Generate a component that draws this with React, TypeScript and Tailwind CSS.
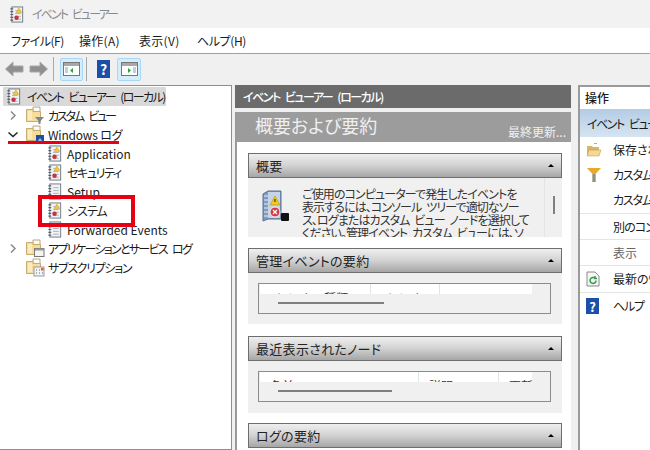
import { FC, ReactNode } from 'react';

const LogBook: FC<{ plain?: boolean }> = ({ plain }) => (
    <svg width="16" height="17" viewBox="0 0 16 18" className="shrink-0">
        <rect x="2.5" y="1" width="11.5" height="16" fill="#f2f3f5" stroke="#6f7784" />
        <path d="M1 3h3M1 6h3M1 9h3M1 12h3M1 15h3" stroke="#56606e" strokeWidth="1.2" />
        <path d="M6 5h6M6 8h6M6 11h6M6 14h6" stroke="#a9b0ba" />
        {!plain && <path d="M10 2l3 5H7z" fill="#f3c62f" stroke="#c99a1a" strokeWidth=".5" />}
        {!plain && <circle cx="7.5" cy="12.5" r="2.4" fill="#c8343c" />}
    </svg>
);

const Folder: FC<{ children?: ReactNode }> = ({ children }) => (
    <svg width="19" height="19" viewBox="0 0 19 19" className="-mr-[1px] shrink-0">
        <path d="M7 1h7v6H7z" fill="#fbfbf8" stroke="#b9a679" />
        <path d="M.5 3.5h6.5v2h7.5v10H.5z" fill="#f6dd9c" stroke="#c6ac6e" />
        <path d="M2 5h4v9H2z" fill="#fbebbd" />
        {children}
    </svg>
);

const TreeRow: FC<{ indent?: string; arrow?: 'right' | 'down'; icon: ReactNode; label: string; textClass?: string }> = ({ indent = 'pl-[5px]', arrow, icon, label, textClass = 'tracking-[-1.4px]' }) => (
    <div className={`flex h-[19px] items-center ${indent}`}>
        {arrow !== undefined ? (
            <svg width="10" height="9" viewBox="0 0 10 9" className="mr-[8px] shrink-0">
                {arrow === 'right'
                    ? <path d="M3 .5l4 4-4 4" fill="none" stroke="#8a8a8a" strokeWidth="1.5" />
                    : <path d="M.5 2.5L5 6.5l4.5-4" fill="none" stroke="#222" strokeWidth="1.5" />}
            </svg>
        ) : null}
        {icon}
        <span className={`ml-[4px] whitespace-nowrap ${textClass}`}>{label}</span>
    </div>
);

const SectionHead: FC<{ title: string }> = ({ title }) => (
    <div className="flex h-[25px] shrink-0 items-center justify-between border border-[#6e6e6e] bg-gradient-to-b from-[#efefef] via-[#d2d2d2] to-[#a6a6a6] px-[7px] text-[13px] tracking-[.3px] text-[#222]">
        <span>{title}</span>
        <span className="mb-[1px] h-0 w-0 border-x-[3px] border-b-[3px] border-x-transparent border-b-black" />
    </div>
);

const TableBox: FC<{ cols: { w: string; label: string }[]; thumb: string }> = ({ cols, thumb }) => (
    <div className="ml-[10px] mr-[11px] h-[31px] border border-[#8c8c8c] bg-[#f0f0f0] pl-[1px]">
        <div className="flex h-[10px] w-[272px] overflow-hidden bg-white text-[12px] leading-[27px] text-[#333]">
            {cols.map((c) => (
                <div key={c.label} className={`${c.w} shrink-0 border-r border-[#e3e3e3] pl-[10px] whitespace-nowrap last:border-r-0`}>{c.label}</div>
            ))}
        </div>
        <div className={`ml-[18px] mt-[8px] h-[2px] ${thumb} bg-[#7f7f7f]`} />
    </div>
);

const ActionRow: FC<{ icon?: ReactNode; label: string; h: string; line?: boolean; dim?: boolean; textClass?: string }> = ({ icon, label, h, line, dim, textClass = 'tracking-[-1.2px]' }) => (
    <div className={`flex items-center whitespace-nowrap ${h} ${line ? 'border-b border-[#e4e4e4]' : ''} ${dim ? 'text-[#666]' : ''}`}>
        <span className="flex w-[33px] shrink-0 justify-start pl-[6px]">{icon}</span>
        <span className={textClass}>{label}</span>
    </div>
);

const App: FC = () => {
    return (
        <div className='relative flex h-[450px] w-[650px] flex-col overflow-hidden bg-[#f0f0f0] text-[12px] text-[#1a1a1a] [font-family:"Noto_Sans_CJK_JP","Noto_Sans",sans-serif] [font-feature-settings:"palt"]'>
            {/* title */}
            <div className="flex h-[28px] shrink-0 items-center bg-[#f2f2f2] pl-[9px] text-[#8a8a8a]">
                <LogBook />
                <span className="ml-[7px] text-[12px] tracking-[-1.9px] [word-spacing:4px]">イベント ビューアー</span>
            </div>
            {/* menu */}
            <div className="flex h-[26px] shrink-0 items-center border-b border-[#a0a0a0] bg-white pl-[11px] text-[12px]">
                <span className="w-[68px] tracking-[-.5px]">ファイル(F)</span>
                <span className="w-[60px] tracking-[.3px]">操作(A)</span>
                <span className="w-[58px] tracking-[.3px]">表示(V)</span>
                <span className="tracking-[-.4px]">ヘルプ(H)</span>
            </div>
            {/* toolbar */}
            <div className="flex h-[30px] shrink-0 items-center bg-[#f0f0f0] pl-[5px]">
                <svg width="43" height="16" viewBox="0 0 43 16">
                    <path d="M.5 8L8 1v4h10v6H8v4z" fill="#8f8f8f" stroke="#a8a8a8" />
                    <path d="M42.5 8L35 1v4H25v6h10v4z" fill="#8f8f8f" stroke="#a8a8a8" />
                </svg>
                <div className="ml-[5px] h-[24px] w-px bg-[#a8a8a8]" />
                <div className="ml-[6px] flex h-[23px] w-[23px] items-center justify-center rounded-[2px] border border-[#a8d8f4] bg-[#d5ecfb]">
                    <svg width="17" height="14" viewBox="0 0 17 14">
                        <rect x=".5" y=".5" width="16" height="13" fill="#fff" stroke="#777" />
                        <rect x="1" y="1" width="15" height="3" fill="#a8a8a8" />
                        <path d="M10 6l-3 2.5 3 2.5z" fill="#2f9e44" />
                        <path d="M2 6h3M2 8h3M2 10h3" stroke="#7f9fc0" />
                    </svg>
                </div>
                <div className="ml-[3px] h-[24px] w-px bg-[#a8a8a8]" />
                <div className="ml-[10px] flex h-[18px] w-[13px] items-center justify-center bg-[#1c4fa8] text-[14px] font-bold leading-none text-white">?</div>
                <div className="ml-[7px] flex h-[23px] w-[24px] items-center justify-center rounded-[2px] border border-[#a8d8f4] bg-[#d5ecfb]">
                    <svg width="17" height="14" viewBox="0 0 17 14">
                        <rect x=".5" y=".5" width="16" height="13" fill="#fff" stroke="#777" />
                        <rect x="1" y="1" width="15" height="3" fill="#a8a8a8" />
                        <path d="M7 6l3 2.5L7 11z" fill="#2f9e44" />
                        <path d="M12 6h3M12 8h3M12 10h3" stroke="#7f9fc0" />
                    </svg>
                </div>
            </div>

            {/* body */}
            <div className="flex min-h-0 flex-1 pt-[1px]">
                {/* tree */}
                <div className="w-[232px] shrink-0 border-y border-r border-[#8f8f8f] bg-white pl-[3px] pt-[1px]">
                    <div className="flex h-[19px] w-[163px] items-center rounded-[1px] bg-[#d9d9d9] pl-[3px]">
                        <LogBook />
                        <span className="ml-[5px] whitespace-nowrap tracking-[-1.6px] [word-spacing:4px]">イベント ビューアー (ローカル)</span>
                    </div>
                    <TreeRow arrow="right" textClass="tracking-[-2.2px] [word-spacing:5px]" icon={
                        <Folder><path d="M9 11h9l-3.5 4v3h-2v-3z" fill="#7d8590" /></Folder>
                    } label="カスタム ビュー" />
                    <TreeRow arrow="down" textClass="tracking-[-.2px]" icon={
                        <Folder><rect x="10" y="10" width="8" height="8" fill="#1f4f9c" /><path d="M11 17l3-4 3 4z" fill="#8fc1ea" /></Folder>
                    } label="Windows ログ" />
                    <TreeRow indent="pl-[44px]" textClass="" icon={<LogBook />} label="Application" />
                    <TreeRow indent="pl-[44px]" icon={<LogBook />} label="セキュリティ" />
                    <TreeRow indent="pl-[44px]" textClass="" icon={<LogBook plain />} label="Setup" />
                    <TreeRow indent="pl-[44px]" textClass="tracking-[-1px]" icon={<LogBook />} label="システム" />
                    <TreeRow indent="pl-[44px]" textClass="" icon={<LogBook plain />} label="Forwarded Events" />
                    <TreeRow arrow="right" textClass="tracking-[-1.7px] [word-spacing:4px]" icon={
                        <Folder><rect x="8.5" y="9.5" width="9.5" height="8" fill="#f4f4f4" stroke="#777" /><path d="M9 10.5h9" stroke="#999" strokeWidth="2" /></Folder>
                    } label="アプリケーションとサービス ログ" />
                    <TreeRow indent="pl-[23px]" textClass="tracking-[-1.3px]" icon={
                        <Folder><rect x="8" y="9" width="10" height="9" fill="#f4f4f4" stroke="#999" /><path d="M10 12h1M13 12h1M10 15h1M13 15h1M16 15h1" stroke="#3a6ea5" /><rect x="15" y="10" width="2.5" height="2.5" fill="#d2603a" /></Folder>
                    } label="サブスクリプション" />
                </div>

                {/* center */}
                <div className="ml-[3px] flex w-[336px] shrink-0 flex-col overflow-hidden">
                    <div className="flex h-[23px] shrink-0 items-center bg-[#6b6b6b] pl-[8px] font-medium tracking-[-1.5px] text-white [word-spacing:4px]">イベント ビューアー (ローカル)</div>
                    <div className="mt-[4px] flex min-h-0 flex-1 flex-col border-l-2 border-[#9a9a9a] bg-white">
                        <div className="flex h-[30px] shrink-0 items-end justify-between bg-[#9c9c9c] pb-[1px] pl-[18px] pr-[5px] text-[#f0f0f0]">
                            <span className="mb-[2px] text-[18px] leading-[28px]">概要および要約</span>
                            <span className="text-[12px]">最終更新...</span>
                        </div>
                        <div className="flex flex-col pl-[11px] pr-[9px] pt-[11px]">
                            <SectionHead title="概要" />
                            <div className="flex h-[59px] shrink-0 overflow-hidden bg-[#f0f0f0]">
                                <div className="flex w-[297px] shrink-0 overflow-hidden border-r border-[#e4e4e4] pt-[11px]">
                                    <svg width="30" height="34" viewBox="0 0 30 34" className="ml-[14px] mr-[10px] shrink-0">
                                        <path d="M1 5l5-3h13v28H6l-5 2z" fill="#7f9cc0" stroke="#5a7090" />
                                        <path d="M6 3h12v26H6z" fill="#c5d5e8" />
                                        <path d="M2 7h4M2 11h4M2 15h4M2 19h4M2 23h4M2 27h4" stroke="#e6edf5" />
                                        <path d="M13 7l5 9H8z" fill="#f5c81e" stroke="#b68e10" strokeWidth=".6" />
                                        <path d="M13 10v3" stroke="#333" strokeWidth="1.2" />
                                        <circle cx="13" cy="23" r="5" fill="#d23b46" stroke="#f3f3f3" />
                                        <path d="M11 21l4 4M15 21l-4 4" stroke="#fff" strokeWidth="1.3" />
                                        <rect x="19" y="24" width="8" height="8" rx="1" fill="#111" />
                                    </svg>
                                    <p className="-mt-[2px] shrink-0 text-[12px] leading-[13px] tracking-[-.9px] whitespace-nowrap text-[#333] [word-spacing:3px]">
                                        ご使用のコンピューターで発生したイベントを<br />
                                        表示するには、コンソール ツリーで適切なソー<br />
                                        ス、ログまたはカスタム ビュー ノードを選択して<br />
                                        ください。管理イベント カスタム ビューには、ソ
                                    </p>
                                </div>
                                <div className="ml-[8px] mt-[18px] h-[18px] w-[2px] bg-[#7f7f7f]" />
                            </div>
                            <div className="h-[11px] shrink-0" />
                            <SectionHead title="管理イベントの要約" />
                            <div className="h-[51px] shrink-0 bg-[#f0f0f0] pt-[10px]">
                                <TableBox thumb="w-[106px]" cols={[
                                    { w: 'w-[111px]', label: 'イベントの種類' },
                                    { w: 'w-[69px]', label: 'イベント ID' },
                                    { w: 'w-[92px]', label: 'ソース' },
                                ]} />
                            </div>
                            <div className="h-[12px] shrink-0" />
                            <SectionHead title="最近表示されたノード" />
                            <div className="h-[52px] shrink-0 bg-[#f0f0f0] pt-[10px]">
                                <TableBox thumb="w-[114px]" cols={[
                                    { w: 'w-[159px]', label: '名前' },
                                    { w: 'w-[80px]', label: '説明' },
                                    { w: 'w-[33px]', label: '更新' },
                                ]} />
                            </div>
                            <div className="h-[10px] shrink-0" />
                            <SectionHead title="ログの要約" />
                        </div>
                    </div>
                </div>

                {/* actions */}
                <div className="ml-[7px] min-w-0 flex-1 overflow-hidden border-l-2 border-t-2 border-[#9a9a9a] bg-white">
                    <div className="flex h-[23px] items-center border-b border-[#c8c8c8] pl-[5px] whitespace-nowrap font-medium">操作</div>
                    <div className="flex h-[27px] items-center bg-gradient-to-b from-[#b4cde5] to-[#d6e4f1] pl-[7px] tracking-[-1.5px] whitespace-nowrap [word-spacing:4px]">イベント ビューアー (ローカル)</div>
                    <ActionRow h="h-[25px]" textClass="" label="保存されたログを開く..." icon={
                        <svg width="16" height="14" viewBox="0 0 16 14"><path d="M8 .5h3" stroke="#8fbf8f" /><path d="M1 3h5l1 1h6v8H1z" fill="#d9b565" /><path d="M3 7h12l-2 6H1z" fill="#f2d894" stroke="#b89450" strokeWidth=".5" /></svg>
                    } />
                    <ActionRow h="h-[25px]" label="カスタム ビューの作成..." icon={
                        <svg width="16" height="16" viewBox="0 0 16 16"><path d="M1 1h14L9.5 7v8h-3V7z" fill="#e8a92a" /><path d="M6.5 7h3v8h-3z" fill="#8b8f96" /></svg>
                    } />
                    <ActionRow h="h-[27px]" line label="カスタム ビューのインポート..." />
                    <ActionRow h="h-[26px]" line textClass="tracking-[-.9px]" label="別のコンピューターへ接続..." />
                    <ActionRow h="h-[26px]" line dim textClass="" label="表示" />
                    <ActionRow h="h-[27px]" line textClass="" label="最新の情報に更新" icon={
                        <svg width="14" height="16" viewBox="0 0 14 16"><path d="M1 1h8l4 4v10H1z" fill="#f6f6f6" stroke="#8a8a8a" /><path d="M10 9.5a3 3 0 1 1-1-2.3M9 5v2.5h2" fill="none" stroke="#2f9e44" strokeWidth="1.5" /></svg>
                    } />
                    <ActionRow h="h-[26px]" label="ヘルプ" icon={
                        <span className="flex h-[16px] w-[13px] items-center justify-center bg-[#1c4fa8] text-[13px] font-bold leading-none text-white">?</span>
                    } />
                </div>
            </div>

            {/* annotations */}
            <div className="absolute left-[8px] top-[141px] h-[3px] w-[111px] bg-[#e60012]" />
            <div className="absolute left-[38px] top-[195px] h-[32px] w-[97px] border-[4px] border-[#e60012]" />
        </div>
    );
}

export default App;
